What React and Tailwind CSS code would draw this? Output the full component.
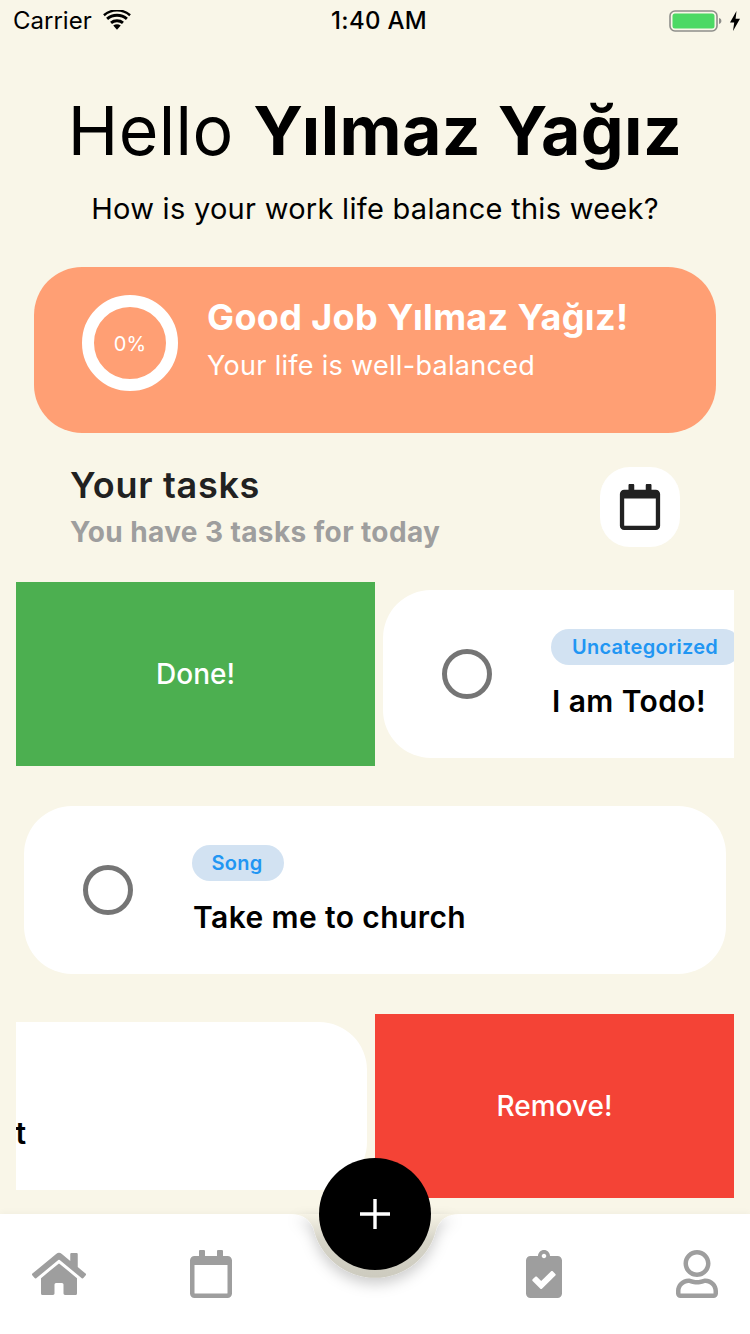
import { FaHome, FaRegCalendar, FaClipboardCheck, FaRegUser } from "react-icons/fa";

function TaskCard({ tag, title, tagWidth, titleTracking = "tracking-[0.4px]", className = "" }) {
  return (
    <div className={`flex h-[168px] w-[702px] shrink-0 items-center rounded-[48px] bg-white ${className}`}>
      <div className="ml-[59px] h-[50px] w-[50px] shrink-0 rounded-full border-[5px] border-[#757575]" />
      <div className="mt-[3px] ml-[59px] flex flex-col items-start whitespace-nowrap">
        <span className={`flex h-9 items-center justify-center rounded-[18px] bg-[#d2e2f2] pr-[2px] text-[20px] font-semibold tracking-[0.3px] text-[#2196f3] ${tagWidth}`}>
          {tag}
        </span>
        <span className={`mt-[14px] ml-px text-[30px] leading-[44px] font-semibold text-black ${titleTracking}`}>{title}</span>
      </div>
    </div>
  );
}

function StatusBar() {
  return (
    <div className="relative flex h-10 shrink-0 items-center justify-between pt-px pl-[13px] pr-[9px] text-[24px] text-black">
      <div className="flex items-center gap-[11px]">
        <span>Carrier</span>
        <svg width="28" height="21" viewBox="0 0 30 22">
          <path d="M15 21l-4-4.6c2.3-1.8 5.7-1.8 8 0z" fill="#000" />
          <path d="M8.6 13.6c3.6-3 9.2-3 12.8 0" fill="none" stroke="#000" strokeWidth="3.2" />
          <path d="M4.4 9.2c6-5.2 15.2-5.2 21.2 0" fill="none" stroke="#000" strokeWidth="3.2" />
          <path d="M1 4.8c8-7 20-7 28 0" fill="none" stroke="#000" strokeWidth="2.6" transform="translate(0 .6)" />
        </svg>
      </div>
      <span className="absolute left-0 right-0 pl-2 text-center font-medium tracking-[0.3px]">1:40 AM</span>
      <div className="flex items-center gap-[7px]">
        <svg width="53" height="24" viewBox="0 0 53 24">
          <rect x="1" y="2" width="47" height="20" rx="5" fill="none" stroke="#8e8e8a" strokeWidth="1.6" />
          <rect x="3.5" y="4.5" width="42" height="15" rx="2.5" fill="#4cd964" />
          <path d="M50 9c1.6.4 2.4 1.6 2.4 3s-.8 2.6-2.4 3z" fill="#8e8e8a" />
        </svg>
        <svg width="12" height="22" viewBox="0 0 12 22">
          <path d="M7.5 1L1 12.5h4.2L4 21l7-12.2H6.6z" fill="#000" />
        </svg>
      </div>
    </div>
  );
}

function BottomBar() {
  return (
    <div className="relative flex h-[120px] shrink-0 items-start bg-white pl-8 pt-[36px] text-[#9e9e9e] shadow-[0_-2px_6px_rgba(0,0,0,0.03)]">
      <FaHome size={54} className="-mt-[3px]" />
      <FaRegCalendar size={48} className="ml-[101px]" />
      <FaClipboardCheck size={48} className="ml-[285px]" />
      <FaRegUser size={48} className="ml-[105px]" />
      {/* Cut-out behind the add button */}
      <svg className="absolute top-0 left-[275px] overflow-visible" width="200" height="64" viewBox="0 0 200 64">
        <defs>
          <filter id="notch-shadow" x="-20%" y="-20%" width="140%" height="170%">
            <feDropShadow dx="0" dy="6" stdDeviation="7" floodColor="#000" floodOpacity="0.2" />
          </filter>
          <linearGradient id="notch-fill" x1="0" y1="0" x2="0" y2="1">
            <stop offset="0" stopColor="#f6f3e6" />
            <stop offset="0.4" stopColor="#d6d4c8" />
            <stop offset="1" stopColor="#cdcbbf" />
          </linearGradient>
        </defs>
        <path
          d="M15 0C28 0 34 5 38.4 14A63 63 0 0 0 161.6 14C166 5 172 0 185 0Z"
          fill="url(#notch-fill)"
          filter="url(#notch-shadow)"
        />
      </svg>
      <button className="absolute -top-[56px] left-[319px] flex h-[112px] w-[112px] items-center justify-center rounded-full bg-black">
        <svg width="32" height="32" viewBox="0 0 32 32">
          <path d="M16 1v30M1 16h30" stroke="#fff" strokeWidth="3.4" />
        </svg>
      </button>
    </div>
  );
}

export default function App() {
  return (
    <div className="flex h-[1334px] w-[750px] flex-col overflow-hidden bg-[#f9f6e8] font-['Inter',sans-serif]">
      <StatusBar />

      <header className="mt-[47px] flex flex-col items-center text-black">
        <h1 className="text-[68px] leading-[86px] font-normal tracking-[0.4px] whitespace-nowrap">
          Hello <span className="font-bold">Yılmaz Yağız</span>
        </h1>
        <p className="mt-[16px] text-[29px] leading-[40px] tracking-[0.28px]">How is your work life balance this week?</p>
      </header>

      <section className="mx-[34px] mt-[38px] flex h-[166px] shrink-0 items-start rounded-[48px] bg-[#ff9f74] pt-[28px] pl-[48px] text-white">
        <div className="flex h-[96px] w-[96px] shrink-0 items-center justify-center rounded-full border-[12px] border-white pt-px text-[20px]">
          0%
        </div>
        <div className="ml-[29px] flex flex-col whitespace-nowrap">
          <span className="text-[36px] leading-[44px] font-bold tracking-[0.36px]">Good Job Yılmaz Yağız!</span>
          <span className="mt-[5px] text-[27px] leading-[44px] tracking-[0.3px]">Your life is well-balanced</span>
        </div>
      </section>

      <section className="mt-[34px] flex items-start justify-between pl-[70px] pr-[70px]">
        <div className="-mt-[2px] flex flex-col whitespace-nowrap">
          <span className="text-[36px] leading-[40px] font-semibold tracking-[0.7px] text-[#212121]">Your tasks</span>
          <span className="mt-[7px] text-[28px] leading-[40px] font-bold tracking-[0.39px] text-[#9e9e9e]">You have 3 tasks for today</span>
        </div>
        <div className="flex h-20 w-20 items-center justify-center rounded-[30px] bg-white text-[#212121]">
          <FaRegCalendar size={46} />
        </div>
      </section>

      <div className="mx-4 mt-[30px] flex flex-col gap-8">
        <div className="flex h-[184px] overflow-hidden">
          <div className="flex w-[359px] shrink-0 items-center justify-center bg-[#4caf50] text-[28px] font-medium text-white">Done!</div>
          <TaskCard tag="Uncategorized" title="I am Todo!" tagWidth="w-[190px]" className="mx-2 my-2" />
        </div>
        <div className="flex h-[184px] items-center overflow-hidden">
          <TaskCard tag="Song" title="Take me to church" tagWidth="w-[92px]" className="mx-2" />
        </div>
        <div className="flex h-[184px] items-center overflow-hidden">
          <TaskCard tag="Work" title="Fix my report" titleTracking="tracking-[0.1px]" tagWidth="w-[92px]" className="mr-2 -ml-[351px]" />
          <div className="flex h-full w-[359px] shrink-0 items-center justify-center bg-[#f44336] text-[28px] font-medium text-white">Remove!</div>
        </div>
      </div>

      <div className="min-h-0 flex-1" />
      <BottomBar />
    </div>
  );
}
